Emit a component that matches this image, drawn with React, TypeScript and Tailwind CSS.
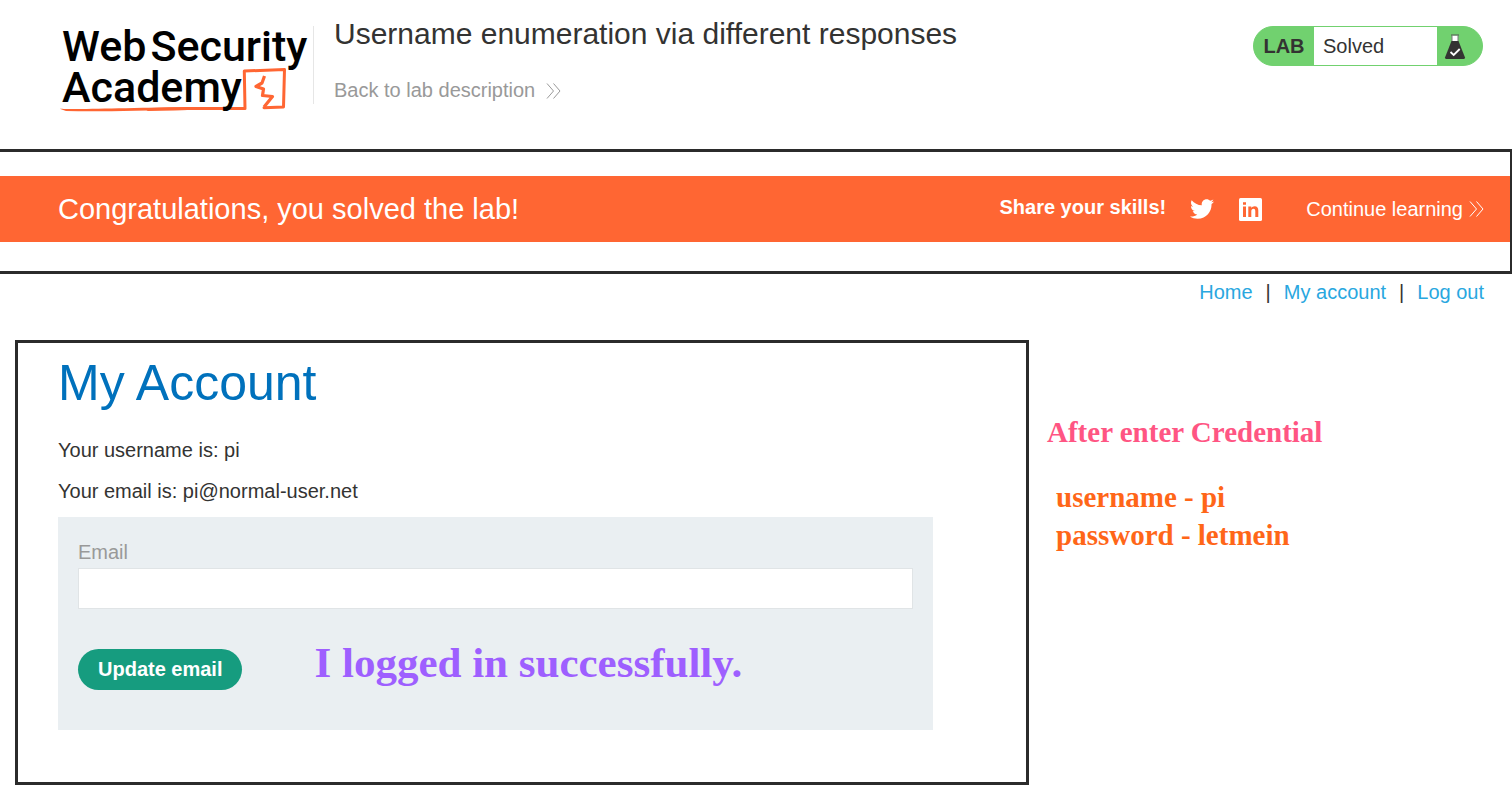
import { FaTwitter } from 'react-icons/fa';

function Chevrons({ className }: { className: string }) {
  return (
    <svg className={className} viewBox="0 0 15 16" fill="none" stroke="currentColor" strokeWidth="1" aria-hidden="true">
      <path d="M1 .5 7.500 8 1 15.500M7.500 .5 14 8 7.500 15.500" />
    </svg>
  );
}

function LinkedIn() {
  return (
    <svg className="h-[23px] w-[23px]" viewBox="0 0 23 23" aria-hidden="true">
      <rect width="23" height="23" rx="1.500" fill="#fff" />
      <path d="M4 8.500h3V19H4zM4 4.200h3v2.600H4zM9.300 8.500h3v1.600c.7-1.200 1.800-1.900 3.300-1.900 2.700 0 3.700 1.700 3.700 4.400V19h-3v-5.800c0-1.500-.4-2.500-1.700-2.500-1.500 0-2.300 1.100-2.300 2.700V19h-3z" fill="#ff6633" />
    </svg>
  );
}

function Logo() {
  return (
    <a
      href="#academy"
      className="relative block h-[90px] w-[255px] shrink-0 pl-1 font-[Roboto,sans-serif] text-[43px] leading-[41px] font-medium text-black"
    >
      <svg className="absolute top-0 left-0 h-[90px] w-[255px]" viewBox="0 0 255 90" fill="none" aria-hidden="true">
        <path
          d="M187 82.500 186.300 45 226.500 43.500 225.500 81 206 81.800M187 82.500 130 82.500 90 83.500"
          stroke="#ff6633"
          strokeWidth="3"
          strokeLinejoin="round"
          strokeLinecap="round"
        />
        <path d="M1 82.500C8 84 60 82 130 81v3C80 84.500 40 86 8 85Z" fill="#ff6633" />
        <path d="M206.500 50 204 57 198 60.500 205.500 63 204.500 69.500 214.500 70.500 206 81" stroke="#ff6633" strokeWidth="3.200" strokeLinejoin="round" />
      </svg>
      <span className="relative flex gap-1">
        <span>Web</span>
        <span>Security</span>
      </span>
      <span className="relative block">Academy</span>
    </a>
  );
}

function Flask() {
  return (
    <svg className="h-[26px] w-[22px]" viewBox="0 0 22 26" fill="none" aria-hidden="true">
      <path d="M8 1.500V8h6V1.500" fill="#fff" stroke="#777" strokeWidth="1" />
      <path d="M7 1h8" stroke="#555" strokeWidth="1" />
      <path d="M7.500 7h7L21 23.500Q21 25 19.500 25H2.500Q1 25 1 23.500Z" fill="#333332" />
      <path d="m6.500 18 3.200 3 6-6" stroke="#fff" strokeWidth="1.800" />
    </svg>
  );
}

export default function App() {
  return (
    <div className="min-h-screen bg-white font-['Liberation_Sans',Arial,sans-serif] text-xl leading-[25px] text-[#333332]">
      <header className="flex h-[149px] items-start pt-4 pr-[29px] pl-[58px]">
        <div className="flex pt-[10px]">
          <Logo />
          <div className="h-[78px] w-px bg-[#e6e6e6]" />
        </div>
        <div className="min-w-0 flex-1 pl-5">
          <h2 className="text-[30px] leading-9">Username enumeration via different responses</h2>
          <a href="#lab" className="mt-[26px] inline-flex items-center gap-[11px] text-[#999]">
            Back to lab description
            <Chevrons className="h-4 w-[15px]" />
          </a>
        </div>
        <div className="mt-[10px] flex h-10 w-[230px] shrink-0 overflow-hidden rounded-full border border-[#71d16f] bg-[#71d16f]">
          <p className="flex w-[60px] items-center justify-center text-xl font-bold">LAB</p>
          <p className="flex flex-1 items-center bg-white pl-[9px]">Solved</p>
          <span className="flex w-[45px] items-center pt-[2px] pl-[7px]">
            <Flask />
          </span>
        </div>
      </header>

      <section className="border-y-3 border-r-2 border-[#2b2b2b] pt-6 pb-[29px]">
        <div className="flex h-[66px] items-center bg-[#ff6633] pr-[26px] pl-[58px] text-white">
          <h4 className="flex-1 text-[29px] leading-9">Congratulations, you solved the lab!</h4>
          <span className="mr-6 pb-[3px] font-bold">Share your skills!</span>
          <a href="#twitter" aria-label="Share on Twitter" className="mr-[25px]">
            <FaTwitter size={24} />
          </a>
          <a href="#linkedin" aria-label="Share on LinkedIn" className="mr-11">
            <LinkedIn />
          </a>
          <a href="#learn" className="flex items-center gap-[6px]">
            Continue learning
            <Chevrons className="h-4 w-[15px]" />
          </a>
        </div>
      </section>

      <nav className="flex justify-end gap-[13px] pt-[6px] pr-7">
        <a href="#home" className="text-[#29a7df]">Home</a>
        <span>|</span>
        <a href="#account" className="text-[#29a7df]">My account</a>
        <span>|</span>
        <a href="#logout" className="text-[#29a7df]">Log out</a>
      </nav>

      <div className="mt-[35px] flex items-start pl-[15px]">
        <main className="flex-1 border-3 border-[#2b2b2b] pr-[93px] pb-[52px] pl-10">
          <h1 className="pt-[10px] text-[50px] leading-[60px] text-[#0071bc]">My Account</h1>
          <p className="mt-[25px]">Your username is: pi</p>
          <p className="mt-4">Your email is: pi@normal-user.net</p>
          <form className="mt-[13px] bg-[#eaeff2] px-5 pt-[23px] pb-10" onSubmit={(e) => e.preventDefault()}>
            <label htmlFor="email" className="block text-[#999]">Email</label>
            <input
              id="email"
              type="email"
              className="mt-[3px] block h-[41px] w-full border border-[#e0e4e6] bg-white px-2 outline-none"
            />
            <div className="mt-10 flex items-start gap-[72px]">
              <button type="submit" className="h-[41px] rounded-full bg-[#169c7f] px-5 font-bold text-white">
                Update email
              </button>
              <p className="font-['Liberation_Serif',serif] text-[43px] leading-7 font-bold text-[#9e5fff]">
                I logged in successfully.
              </p>
            </div>
          </form>
        </main>
        <aside className="w-[483px] shrink-0 pt-[73px] pl-[18px] font-['Liberation_Serif',serif] text-[29px] leading-[38px] font-bold">
          <p className="text-[#ff5583]">After enter Credential</p>
          <div className="mt-[27px] pl-[9px] text-[#ff6618]">
            <p>username - pi</p>
            <p>password - letmein</p>
          </div>
        </aside>
      </div>
    </div>
  );
}
